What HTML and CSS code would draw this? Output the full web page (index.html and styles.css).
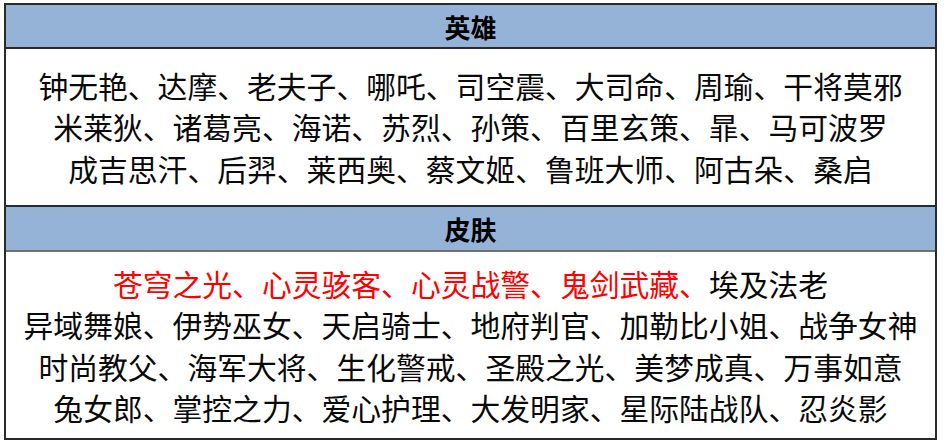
FILE: index.html
```html
<!DOCTYPE html>
<html lang="zh">
<head>
<meta charset="utf-8">
<link rel="stylesheet" href="styles.css">
</head>
<body>
<div class="sheet">
  <div class="head head-hero">英雄</div>
  <div class="cell cell-hero">
    <div class="line">钟无艳、达摩、老夫子、哪吒、司空震、大司命、周瑜、干将莫邪</div>
    <div class="line">米莱狄、诸葛亮、海诺、苏烈、孙策、百里玄策、暃、马可波罗</div>
    <div class="line">成吉思汗、后羿、莱西奥、蔡文姬、鲁班大师、阿古朵、桑启</div>
  </div>
  <div class="head head-skin">皮肤</div>
  <div class="cell cell-skin">
    <div class="line"><span class="red">苍穹之光、心灵骇客、心灵战警、鬼剑武藏、</span>埃及法老</div>
    <div class="line">异域舞娘、伊势巫女、天启骑士、地府判官、加勒比小姐、战争女神</div>
    <div class="line">时尚教父、海军大将、生化警戒、圣殿之光、美梦成真、万事如意</div>
    <div class="line">兔女郎、掌控之力、爱心护理、大发明家、星际陆战队、忍炎影</div>
  </div>
</div>
</body>
</html>
```
FILE: styles.css
```css
html, body {
  margin: 0;
  padding: 0;
  background: #ffffff;
}
body {
  font-family: "Noto Sans CJK SC", "Noto Sans", sans-serif;
  color: #0a0a0a;
}
.sheet {
  margin: 3px 0 0 4px;
  width: 929px;
  border: 2px solid #2a2a2a;
}
.head {
  background: #95b3d7;
  font-weight: 700;
  font-size: 26px;
  text-align: center;
  color: #000000;
  display: flex;
  align-items: center;
  justify-content: center;
}
.head-hero {
  height: 42px;
  border-bottom: 2px solid #2a2a2a;
}
.head-skin {
  height: 43px;
  border-bottom: 2px solid #6f6f6f;
}
.cell {
  display: flex;
  flex-direction: column;
  justify-content: center;
  align-items: center;
  font-size: 29.8px;
}
.cell-hero {
  height: 156px;
  border-bottom: 2px solid #2a2a2a;
}
.cell-skin {
  height: 186px;
  padding-top: 1px;
  box-sizing: border-box;
}
.line {
  line-height: 41.3px;
  white-space: nowrap;
}
.red {
  color: #ff0000;
}
```
